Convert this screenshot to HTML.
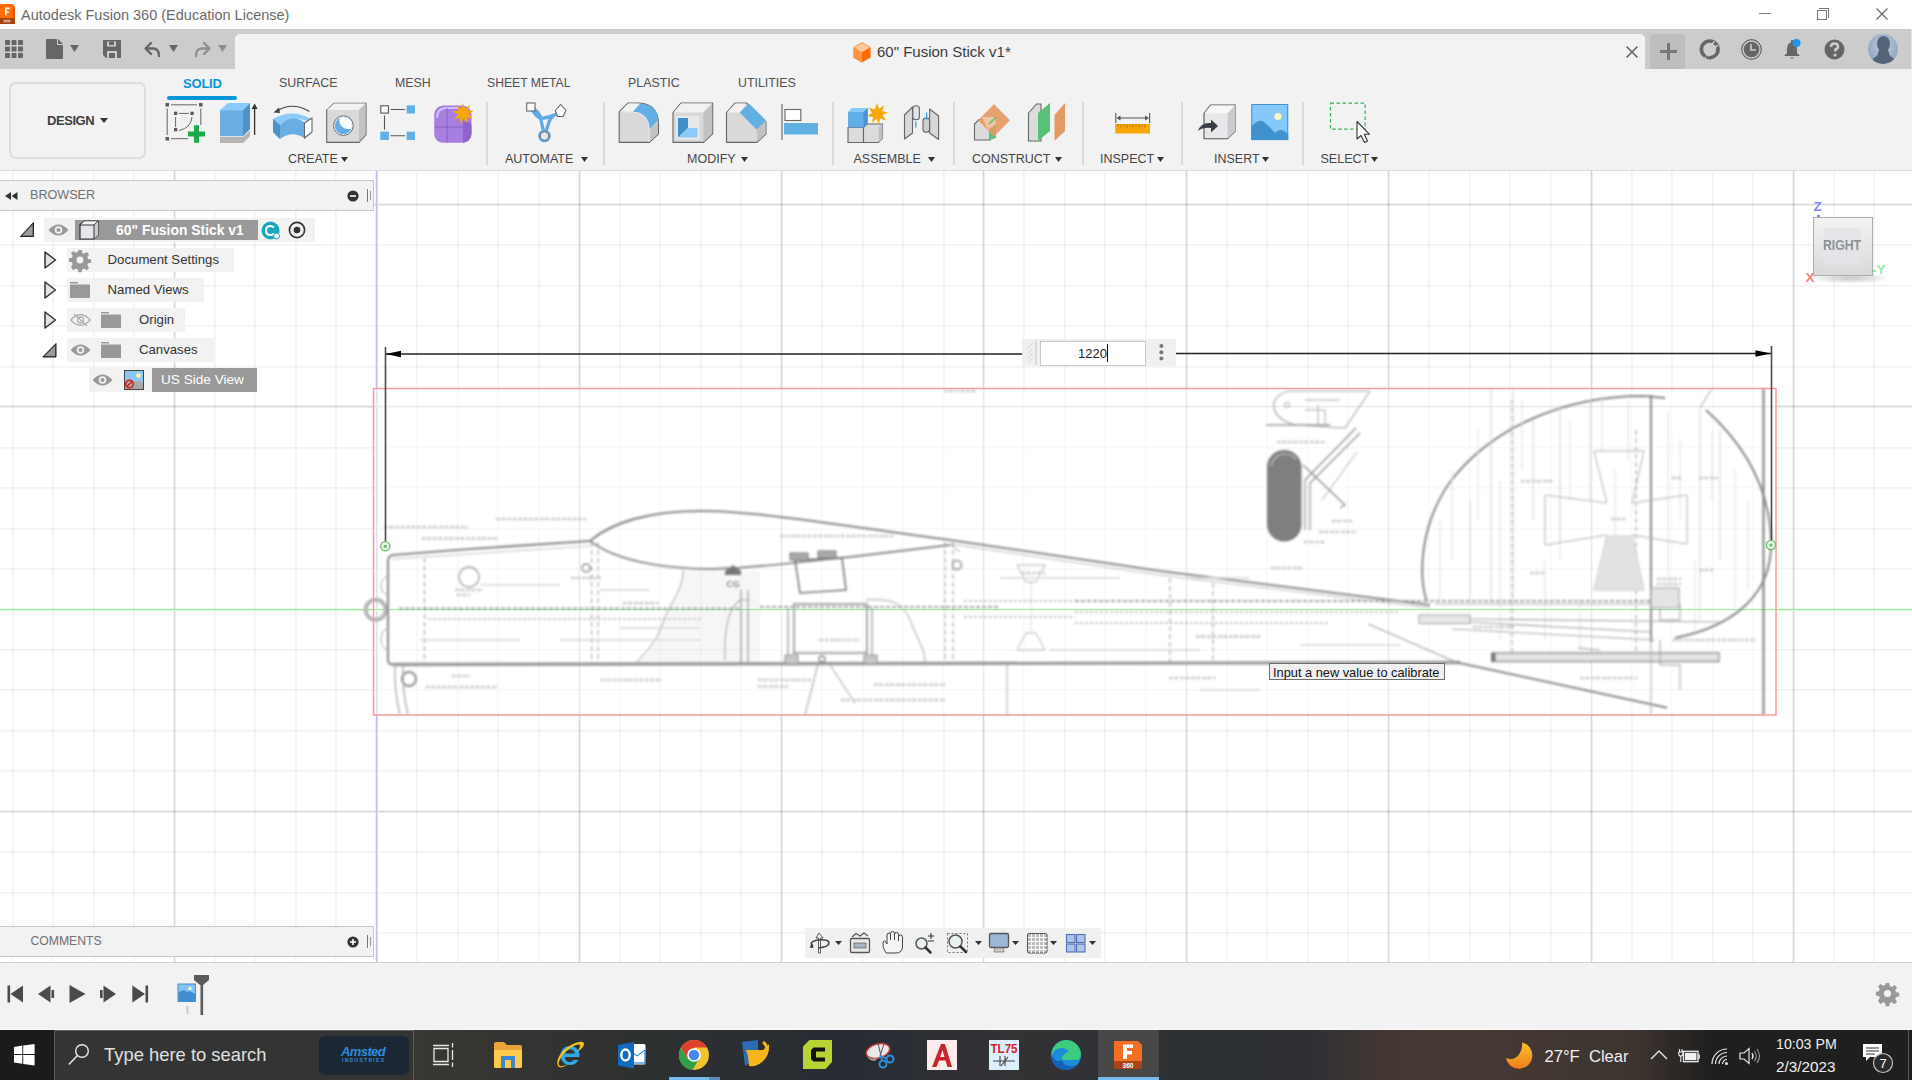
<!DOCTYPE html>
<html><head><meta charset="utf-8">
<style>
*{margin:0;padding:0;box-sizing:border-box}
html,body{width:1912px;height:1080px;overflow:hidden;background:#fff;font-family:"Liberation Sans",sans-serif}
.a{position:absolute}
.t{position:absolute;white-space:pre;line-height:1}
svg{position:absolute;overflow:visible}
</style></head><body>
<!-- TITLE BAR -->
<div class="a" style="left:0;top:0;width:1912px;height:29px;background:#fff"></div>
<svg style="left:0;top:4px" width="16" height="21" viewBox="0 0 16 21"><path d="M0 0H13L15 3V20H0Z" fill="#FF6D0A"/><path d="M13 3.5L15 4V20H13Z" fill="#D9560A"/><rect x="0" y="14" width="15" height="6" fill="#A8430F"/><path d="M5 3.6H9.6V5.2H6.6V7.4H9V8.8H6.6V11.2H5Z" fill="#fff"/><rect x="3.5" y="15.8" width="7" height="2.6" fill="#D8B8A8" opacity=".8"/></svg>
<div class="t" style="left:21px;top:8px;font-size:14.5px;color:#6b6b6b">Autodesk Fusion 360 (Education License)</div>
<div class="a" style="left:1759px;top:13px;width:12px;height:1px;background:#777"></div>
<div class="a" style="left:1817px;top:10px;width:10px;height:10px;border:1px solid #777;background:#fff"></div>
<div class="a" style="left:1819px;top:8px;width:10px;height:10px;border-top:1px solid #777;border-right:1px solid #777"></div>
<svg style="left:1876px;top:8px" width="12" height="12"><path d="M0.5 0.5L11.5 11.5M11.5 0.5L0.5 11.5" stroke="#666" stroke-width="1.1"/></svg>
<!-- TAB BAR -->
<div class="a" style="left:0;top:29px;width:1911px;height:40px;background:#CCCCCC"></div>
<div class="a" style="left:1911px;top:29px;width:1px;height:40px;background:#E4E4E4"></div>
<div class="a" style="left:235px;top:34px;width:1410px;height:35px;background:#F2F2F2;border-radius:5px 5px 0 0"></div>
<div class="a" style="left:1650px;top:34px;width:35px;height:35px;background:#BEBEBE;border-radius:4px 4px 0 0"></div>
<svg style="left:5px;top:40px" width="18" height="18" viewBox="0 0 18 18" fill="#666"><rect x="0" y="0" width="5" height="5" rx=".8"/><rect x="6.5" y="0" width="5" height="5" rx=".8"/><rect x="13" y="0" width="5" height="5" rx=".8"/><rect x="0" y="6.5" width="5" height="5" rx=".8"/><rect x="6.5" y="6.5" width="5" height="5" rx=".8"/><rect x="13" y="6.5" width="5" height="5" rx=".8"/><rect x="0" y="13" width="5" height="5" rx=".8"/><rect x="6.5" y="13" width="5" height="5" rx=".8"/><rect x="13" y="13" width="5" height="5" rx=".8"/></svg>
<svg style="left:46px;top:39px" width="17" height="20" viewBox="0 0 17 20"><path d="M1 0H11V6H17V19Q17 20 16 20H1Q0 20 0 19V1Q0 0 1 0Z" fill="#666"/><path d="M12 0L17 5H12Z" fill="#666"/></svg>
<svg style="left:70px;top:45px" width="9" height="7"><path d="M0 0H9L4.5 7Z" fill="#666"/></svg>
<svg style="left:103px;top:40px" width="18" height="18" viewBox="0 0 18 18"><path d="M1 0H17Q18 0 18 1V17Q18 18 17 18H3L0 15V1Q0 0 1 0Z" fill="#666"/><rect x="4" y="1.5" width="9" height="5" fill="#CCC"/><rect x="6" y="1.5" width="5" height="3.5" fill="#666"/><rect x="4" y="11" width="10" height="7" fill="#CCC"/><rect x="6" y="13" width="6" height="5" fill="#666"/></svg>
<svg style="left:144px;top:42px" width="17" height="15" viewBox="0 0 17 15"><path d="M7 1L1.5 6.5L7 12M2 6.5H9Q15 6.5 15 14" fill="none" stroke="#666" stroke-width="2.4" stroke-linecap="round" stroke-linejoin="round"/></svg>
<svg style="left:169px;top:45px" width="9" height="7"><path d="M0 0H9L4.5 7Z" fill="#666"/></svg>
<svg style="left:194px;top:42px" width="17" height="15" viewBox="0 0 17 15"><path d="M10 1L15.5 6.5L10 12M15 6.5H8Q2 6.5 2 14" fill="none" stroke="#8E8E8E" stroke-width="2.4" stroke-linecap="round" stroke-linejoin="round"/></svg>
<svg style="left:218px;top:45px" width="9" height="7"><path d="M0 0H9L4.5 7Z" fill="#8E8E8E"/></svg>
<!-- doc title -->
<svg style="left:852.5px;top:41.5px" width="18" height="21" viewBox="0 0 18 21"><path d="M9 0.5L17.3 5.2L9 10L0.7 5.2Z" fill="#FFC99C"/><path d="M0.7 5.2L9 10V20.3L0.7 15.5Z" fill="#FF9142"/><path d="M17.3 5.2L9 10V20.3L17.3 15.5Z" fill="#FF6B00"/><path d="M9 0.5L17.3 5.2V15.5L9 20.3L0.7 15.5V5.2Z" fill="none" stroke="#F08A48" stroke-width=".8"/></svg>
<div class="t" style="left:877px;top:44px;font-size:15px;color:#3c3c3c">60" Fusion Stick v1*</div>
<svg style="left:1626px;top:46px" width="12" height="12"><path d="M0.5 0.5L11.5 11.5M11.5 0.5L0.5 11.5" stroke="#666" stroke-width="1.6"/></svg>
<svg style="left:1660px;top:43px" width="17" height="17"><rect x="7" y="0" width="3" height="17" fill="#777"/><rect x="0" y="7" width="17" height="3" fill="#777"/></svg>
<svg style="left:1700px;top:38.5px" width="21" height="21" viewBox="0 0 21 21"><path d="M4.2 16.5A8.3 8.3 0 1 1 7.5 18.3" fill="none" stroke="#666" stroke-width="3.6" stroke-linecap="round"/><path d="M10.5 6.2L14.5 2.5M13.8 9.8L18 6" stroke="#CCC" stroke-width="1.5"/><path d="M5 11Q5 6.5 9 6.7L12 9.5L15.5 12.5Q15 16.5 10.5 16.2L8 18Z" fill="#CCC"/></svg>
<svg style="left:1741px;top:39px" width="21" height="21" viewBox="0 0 21 21"><circle cx="10.5" cy="10.5" r="9.8" fill="none" stroke="#666" stroke-width="1.2"/><circle cx="10.5" cy="10.5" r="7.8" fill="#666"/><path d="M10 5V11H15" fill="none" stroke="#CCC" stroke-width="1.6"/></svg>
<svg style="left:1782px;top:39px" width="22" height="21" viewBox="0 0 22 21"><path d="M10 3Q5 4 5 10V14L2 17H18L15 14V10Q15 4 10 3Z" fill="#666"/><path d="M8 18.5Q10 21 12 18.5Z" fill="#666"/><rect x="9" y="1" width="2" height="3" fill="#666"/><circle cx="14.5" cy="4" r="4" fill="#1B96E8"/></svg>
<svg style="left:1824px;top:39px" width="21" height="21" viewBox="0 0 21 21"><circle cx="10.5" cy="10.5" r="10" fill="#666"/><path d="M7 8Q7 4.5 10.5 4.5Q14 4.5 14 7.5Q14 9.5 11.5 10.5V12.5" fill="none" stroke="#CCC" stroke-width="2.6"/><circle cx="11" cy="16" r="1.6" fill="#CCC"/></svg>
<svg style="left:1868px;top:34px" width="30" height="30" viewBox="0 0 30 30"><defs><radialGradient id="av" cx=".5" cy=".4" r=".6"><stop offset="0" stop-color="#BFCDE0"/><stop offset="1" stop-color="#8FA3BE"/></radialGradient><clipPath id="avc"><circle cx="15" cy="15" r="15"/></clipPath></defs><circle cx="15" cy="15" r="15" fill="url(#av)"/><g clip-path="url(#avc)" fill="#556477"><ellipse cx="15.5" cy="10" rx="6.5" ry="8"/><path d="M11 16H20L22 22Q27 24 28 30H3Q4 24 9 22Z"/></g></svg>
<!-- TOOLBAR -->
<div class="a" style="left:0;top:69px;width:1912px;height:101px;background:#F2F2F2"></div>
<div class="a" style="left:0;top:170px;width:1912px;height:1px;background:#DCDCDC"></div>
<div class="a" style="left:9px;top:82px;width:137px;height:77px;border:2px solid #DDDDDD;border-radius:7px"></div>
<div class="t" style="left:47px;top:113.5px;font-size:13px;font-weight:bold;color:#3E3E3E;letter-spacing:-0.45px">DESIGN</div>
<svg style="left:100px;top:118px" width="8" height="5"><path d="M0 0H8L4 5Z" fill="#333"/></svg>
<div class="t" style="left:183px;top:77px;font-size:13px;color:#0696D7;font-weight:bold;letter-spacing:-0.2px">SOLID</div>
<div class="a" style="left:167px;top:96px;width:70px;height:4px;background:#0696D7;border-radius:2px"></div>
<div class="t" style="left:279px;top:77px;font-size:12.4px;color:#505050">SURFACE</div>
<div class="t" style="left:395px;top:77px;font-size:12.4px;color:#505050">MESH</div>
<div class="t" style="left:487px;top:77px;font-size:12.2px;color:#505050">SHEET METAL</div>
<div class="t" style="left:628px;top:77px;font-size:12.4px;color:#505050">PLASTIC</div>
<div class="t" style="left:738px;top:77px;font-size:12.4px;color:#505050">UTILITIES</div>
<!-- group labels -->
<div class="t" style="left:288px;top:152.5px;font-size:12.5px;color:#454545">CREATE</div>
<svg style="left:341px;top:157px" width="7" height="5"><path d="M0 0H7L3.5 5Z" fill="#333"/></svg>
<div class="t" style="left:505px;top:152.5px;font-size:12.5px;color:#454545">AUTOMATE</div>
<svg style="left:581px;top:157px" width="7" height="5"><path d="M0 0H7L3.5 5Z" fill="#333"/></svg>
<div class="t" style="left:687px;top:152.5px;font-size:12.5px;color:#454545">MODIFY</div>
<svg style="left:741px;top:157px" width="7" height="5"><path d="M0 0H7L3.5 5Z" fill="#333"/></svg>
<div class="t" style="left:853.5px;top:152.5px;font-size:12.5px;color:#454545">ASSEMBLE</div>
<svg style="left:928px;top:157px" width="7" height="5"><path d="M0 0H7L3.5 5Z" fill="#333"/></svg>
<div class="t" style="left:972px;top:152.5px;font-size:12.5px;color:#454545">CONSTRUCT</div>
<svg style="left:1055px;top:157px" width="7" height="5"><path d="M0 0H7L3.5 5Z" fill="#333"/></svg>
<div class="t" style="left:1100px;top:152.5px;font-size:12.5px;color:#454545">INSPECT</div>
<svg style="left:1157px;top:157px" width="7" height="5"><path d="M0 0H7L3.5 5Z" fill="#333"/></svg>
<div class="t" style="left:1214px;top:152.5px;font-size:12.5px;color:#454545">INSERT</div>
<svg style="left:1262px;top:157px" width="7" height="5"><path d="M0 0H7L3.5 5Z" fill="#333"/></svg>
<div class="t" style="left:1320.5px;top:152.5px;font-size:12.5px;color:#454545">SELECT</div>
<svg style="left:1371px;top:157px" width="7" height="5"><path d="M0 0H7L3.5 5Z" fill="#333"/></svg>
<!-- separators -->
<div class="a" style="left:486px;top:102px;width:2px;height:63px;background:#DADADA"></div>
<div class="a" style="left:603px;top:102px;width:2px;height:63px;background:#DADADA"></div>
<div class="a" style="left:832px;top:102px;width:2px;height:63px;background:#DADADA"></div>
<div class="a" style="left:953px;top:102px;width:2px;height:63px;background:#DADADA"></div>
<div class="a" style="left:1082px;top:102px;width:2px;height:63px;background:#DADADA"></div>
<div class="a" style="left:1181px;top:102px;width:2px;height:63px;background:#DADADA"></div>
<div class="a" style="left:1302px;top:102px;width:2px;height:63px;background:#DADADA"></div>
<!-- VIEWPORT -->
<div class="a" style="left:0;top:171px;width:1912px;height:792px;background:#fff;overflow:hidden">
<svg style="left:0;top:0" width="1912" height="792" shape-rendering="crispEdges" fill="#000">
<rect x="0" y="32" width="1912" height="1" fill-opacity="0.051"/><rect x="0" y="33" width="1912" height="1" fill-opacity="0.137"/><rect x="0" y="34" width="1912" height="1" fill-opacity="0.063"/>
<rect x="0" y="73" width="1912" height="1" fill-opacity="0.047"/><rect x="0" y="74" width="1912" height="1" fill-opacity="0.031"/>
<rect x="0" y="114" width="1912" height="1" fill-opacity="0.047"/><rect x="0" y="115" width="1912" height="1" fill-opacity="0.031"/>
<rect x="0" y="154" width="1912" height="1" fill-opacity="0.047"/><rect x="0" y="155" width="1912" height="1" fill-opacity="0.031"/>
<rect x="0" y="195" width="1912" height="1" fill-opacity="0.047"/><rect x="0" y="196" width="1912" height="1" fill-opacity="0.031"/>
<rect x="0" y="234" width="1912" height="1" fill-opacity="0.051"/><rect x="0" y="235" width="1912" height="1" fill-opacity="0.137"/><rect x="0" y="236" width="1912" height="1" fill-opacity="0.063"/>
<rect x="0" y="276" width="1912" height="1" fill-opacity="0.047"/><rect x="0" y="277" width="1912" height="1" fill-opacity="0.031"/>
<rect x="0" y="316" width="1912" height="1" fill-opacity="0.047"/><rect x="0" y="317" width="1912" height="1" fill-opacity="0.031"/>
<rect x="0" y="357" width="1912" height="1" fill-opacity="0.047"/><rect x="0" y="358" width="1912" height="1" fill-opacity="0.031"/>
<rect x="0" y="397" width="1912" height="1" fill-opacity="0.047"/><rect x="0" y="398" width="1912" height="1" fill-opacity="0.031"/>
<rect x="0" y="437" width="1912" height="1" fill-opacity="0.051"/><rect x="0" y="438" width="1912" height="1" fill-opacity="0.137"/><rect x="0" y="439" width="1912" height="1" fill-opacity="0.063"/>
<rect x="0" y="478" width="1912" height="1" fill-opacity="0.047"/><rect x="0" y="479" width="1912" height="1" fill-opacity="0.031"/>
<rect x="0" y="518" width="1912" height="1" fill-opacity="0.047"/><rect x="0" y="519" width="1912" height="1" fill-opacity="0.031"/>
<rect x="0" y="559" width="1912" height="1" fill-opacity="0.047"/><rect x="0" y="560" width="1912" height="1" fill-opacity="0.031"/>
<rect x="0" y="599" width="1912" height="1" fill-opacity="0.047"/><rect x="0" y="600" width="1912" height="1" fill-opacity="0.031"/>
<rect x="0" y="639" width="1912" height="1" fill-opacity="0.051"/><rect x="0" y="640" width="1912" height="1" fill-opacity="0.137"/><rect x="0" y="641" width="1912" height="1" fill-opacity="0.063"/>
<rect x="0" y="680" width="1912" height="1" fill-opacity="0.047"/><rect x="0" y="681" width="1912" height="1" fill-opacity="0.031"/>
<rect x="0" y="721" width="1912" height="1" fill-opacity="0.047"/><rect x="0" y="722" width="1912" height="1" fill-opacity="0.031"/>
<rect x="0" y="761" width="1912" height="1" fill-opacity="0.047"/><rect x="0" y="762" width="1912" height="1" fill-opacity="0.031"/>
<rect x="12" y="0" width="1" height="792" fill-opacity="0.047"/><rect x="13" y="0" width="1" height="792" fill-opacity="0.031"/>
<rect x="52" y="0" width="1" height="792" fill-opacity="0.047"/><rect x="53" y="0" width="1" height="792" fill-opacity="0.031"/>
<rect x="93" y="0" width="1" height="792" fill-opacity="0.047"/><rect x="94" y="0" width="1" height="792" fill-opacity="0.031"/>
<rect x="133" y="0" width="1" height="792" fill-opacity="0.047"/><rect x="134" y="0" width="1" height="792" fill-opacity="0.031"/>
<rect x="173" y="0" width="1" height="792" fill-opacity="0.051"/><rect x="174" y="0" width="1" height="792" fill-opacity="0.149"/><rect x="175" y="0" width="1" height="792" fill-opacity="0.063"/>
<rect x="214" y="0" width="1" height="792" fill-opacity="0.047"/><rect x="215" y="0" width="1" height="792" fill-opacity="0.031"/>
<rect x="254" y="0" width="1" height="792" fill-opacity="0.047"/><rect x="255" y="0" width="1" height="792" fill-opacity="0.031"/>
<rect x="295" y="0" width="1" height="792" fill-opacity="0.047"/><rect x="296" y="0" width="1" height="792" fill-opacity="0.031"/>
<rect x="335" y="0" width="1" height="792" fill-opacity="0.047"/><rect x="336" y="0" width="1" height="792" fill-opacity="0.031"/>
<rect x="375" y="0" width="1" height="792" fill-opacity="0.051"/><rect x="376" y="0" width="1" height="792" fill-opacity="0.149"/><rect x="377" y="0" width="1" height="792" fill-opacity="0.063"/>
<rect x="416" y="0" width="1" height="792" fill-opacity="0.047"/><rect x="417" y="0" width="1" height="792" fill-opacity="0.031"/>
<rect x="457" y="0" width="1" height="792" fill-opacity="0.047"/><rect x="458" y="0" width="1" height="792" fill-opacity="0.031"/>
<rect x="497" y="0" width="1" height="792" fill-opacity="0.047"/><rect x="498" y="0" width="1" height="792" fill-opacity="0.031"/>
<rect x="538" y="0" width="1" height="792" fill-opacity="0.047"/><rect x="539" y="0" width="1" height="792" fill-opacity="0.031"/>
<rect x="578" y="0" width="1" height="792" fill-opacity="0.051"/><rect x="579" y="0" width="1" height="792" fill-opacity="0.149"/><rect x="580" y="0" width="1" height="792" fill-opacity="0.063"/>
<rect x="619" y="0" width="1" height="792" fill-opacity="0.047"/><rect x="620" y="0" width="1" height="792" fill-opacity="0.031"/>
<rect x="659" y="0" width="1" height="792" fill-opacity="0.047"/><rect x="660" y="0" width="1" height="792" fill-opacity="0.031"/>
<rect x="700" y="0" width="1" height="792" fill-opacity="0.047"/><rect x="701" y="0" width="1" height="792" fill-opacity="0.031"/>
<rect x="740" y="0" width="1" height="792" fill-opacity="0.047"/><rect x="741" y="0" width="1" height="792" fill-opacity="0.031"/>
<rect x="780" y="0" width="1" height="792" fill-opacity="0.051"/><rect x="781" y="0" width="1" height="792" fill-opacity="0.149"/><rect x="782" y="0" width="1" height="792" fill-opacity="0.063"/>
<rect x="821" y="0" width="1" height="792" fill-opacity="0.047"/><rect x="822" y="0" width="1" height="792" fill-opacity="0.031"/>
<rect x="862" y="0" width="1" height="792" fill-opacity="0.047"/><rect x="863" y="0" width="1" height="792" fill-opacity="0.031"/>
<rect x="902" y="0" width="1" height="792" fill-opacity="0.047"/><rect x="903" y="0" width="1" height="792" fill-opacity="0.031"/>
<rect x="943" y="0" width="1" height="792" fill-opacity="0.047"/><rect x="944" y="0" width="1" height="792" fill-opacity="0.031"/>
<rect x="982" y="0" width="1" height="792" fill-opacity="0.051"/><rect x="983" y="0" width="1" height="792" fill-opacity="0.149"/><rect x="984" y="0" width="1" height="792" fill-opacity="0.063"/>
<rect x="1023" y="0" width="1" height="792" fill-opacity="0.047"/><rect x="1024" y="0" width="1" height="792" fill-opacity="0.031"/>
<rect x="1064" y="0" width="1" height="792" fill-opacity="0.047"/><rect x="1065" y="0" width="1" height="792" fill-opacity="0.031"/>
<rect x="1104" y="0" width="1" height="792" fill-opacity="0.047"/><rect x="1105" y="0" width="1" height="792" fill-opacity="0.031"/>
<rect x="1145" y="0" width="1" height="792" fill-opacity="0.047"/><rect x="1146" y="0" width="1" height="792" fill-opacity="0.031"/>
<rect x="1185" y="0" width="1" height="792" fill-opacity="0.051"/><rect x="1186" y="0" width="1" height="792" fill-opacity="0.149"/><rect x="1187" y="0" width="1" height="792" fill-opacity="0.063"/>
<rect x="1226" y="0" width="1" height="792" fill-opacity="0.047"/><rect x="1227" y="0" width="1" height="792" fill-opacity="0.031"/>
<rect x="1266" y="0" width="1" height="792" fill-opacity="0.047"/><rect x="1267" y="0" width="1" height="792" fill-opacity="0.031"/>
<rect x="1307" y="0" width="1" height="792" fill-opacity="0.047"/><rect x="1308" y="0" width="1" height="792" fill-opacity="0.031"/>
<rect x="1347" y="0" width="1" height="792" fill-opacity="0.047"/><rect x="1348" y="0" width="1" height="792" fill-opacity="0.031"/>
<rect x="1387" y="0" width="1" height="792" fill-opacity="0.051"/><rect x="1388" y="0" width="1" height="792" fill-opacity="0.149"/><rect x="1389" y="0" width="1" height="792" fill-opacity="0.063"/>
<rect x="1428" y="0" width="1" height="792" fill-opacity="0.047"/><rect x="1429" y="0" width="1" height="792" fill-opacity="0.031"/>
<rect x="1469" y="0" width="1" height="792" fill-opacity="0.047"/><rect x="1470" y="0" width="1" height="792" fill-opacity="0.031"/>
<rect x="1509" y="0" width="1" height="792" fill-opacity="0.047"/><rect x="1510" y="0" width="1" height="792" fill-opacity="0.031"/>
<rect x="1550" y="0" width="1" height="792" fill-opacity="0.047"/><rect x="1551" y="0" width="1" height="792" fill-opacity="0.031"/>
<rect x="1590" y="0" width="1" height="792" fill-opacity="0.051"/><rect x="1591" y="0" width="1" height="792" fill-opacity="0.149"/><rect x="1592" y="0" width="1" height="792" fill-opacity="0.063"/>
<rect x="1631" y="0" width="1" height="792" fill-opacity="0.047"/><rect x="1632" y="0" width="1" height="792" fill-opacity="0.031"/>
<rect x="1671" y="0" width="1" height="792" fill-opacity="0.047"/><rect x="1672" y="0" width="1" height="792" fill-opacity="0.031"/>
<rect x="1712" y="0" width="1" height="792" fill-opacity="0.047"/><rect x="1713" y="0" width="1" height="792" fill-opacity="0.031"/>
<rect x="1752" y="0" width="1" height="792" fill-opacity="0.047"/><rect x="1753" y="0" width="1" height="792" fill-opacity="0.031"/>
<rect x="1792" y="0" width="1" height="792" fill-opacity="0.051"/><rect x="1793" y="0" width="1" height="792" fill-opacity="0.149"/><rect x="1794" y="0" width="1" height="792" fill-opacity="0.063"/>
<rect x="1833" y="0" width="1" height="792" fill-opacity="0.047"/><rect x="1834" y="0" width="1" height="792" fill-opacity="0.031"/>
<rect x="1873" y="0" width="1" height="792" fill-opacity="0.047"/><rect x="1874" y="0" width="1" height="792" fill-opacity="0.031"/>
</svg>
</div>
<div class="a" style="left:376px;top:171px;width:1px;height:792px;background:#C0C0F8"></div>
<div class="a" style="left:377px;top:171px;width:1px;height:792px;background:#DADAFB"></div>
<div class="a" style="left:0;top:609px;width:1912px;height:1px;background:#98F098"></div>
<div class="a" style="left:0;top:610px;width:1912px;height:1px;background:#DDF9DD"></div>
<svg style="left:0;top:0" width="1912" height="180" viewBox="0 0 1912 180">
<defs>
<linearGradient id="gface" x1="0" y1="0" x2="0" y2="1"><stop offset="0" stop-color="#E2E2E2"/><stop offset="1" stop-color="#D2D2D2"/></linearGradient>
</defs>
<!-- sketch -->
<g fill="#5A5A5A">
<rect x="165.5" y="103" width="3.5" height="3.5"/><rect x="199" y="103" width="3.5" height="3.5"/><rect x="165.5" y="137" width="3.5" height="3.5"/>
<rect x="174" y="111.7" width="3.3" height="3.3"/><rect x="190.4" y="111.7" width="3.3" height="3.3"/><rect x="174" y="128" width="3.3" height="3.3"/>
</g>
<g stroke="#666" stroke-width="1" fill="none">
<path d="M171 104.8H197M167.2 108.5V135M200.8 108.5V125M171 138.7H188"/>
<path d="M179 113.4H189M175.6 117V127M192 117Q191 128 179 130.5"/>
</g>
<path d="M194 125.2H199V131.5H205V136.5H199V142.8H194V136.5H188V131.5H194Z" fill="#1EAA4B"/>
<!-- extrude -->
<path d="M220 137H243L250 130.5V136L243 143H220Z" fill="#B5B5B5"/>
<path d="M220 110.2L228 103H250L243 110.2Z" fill="#8BCBFA"/>
<path d="M220 110.2H243V136.2H220Z" fill="#69AEE3"/>
<path d="M243 110.2L250 103V129L243 136.2Z" fill="#4A94CE"/>
<path d="M254.6 107V135" stroke="#333" stroke-width="1.3"/><path d="M251.6 109L254.6 103.5L257.6 109Z" fill="#333"/>
<!-- revolve -->
<path d="M276 111.5Q292 101 309.5 111.5" fill="none" stroke="#444" stroke-width="1.2"/><path d="M273.5 112.5L279 107.5L280 113Z" fill="#444"/>
<path d="M273 119Q292 108 311 119V123Q292 113 280 125V139L273 132Z" fill="#8BCBFA"/>
<path d="M280 125Q292 113 304 122V138Q292 130 280 139Z" fill="#69AEE3"/>
<path d="M273 119L280 125V139L273 132Z" fill="#4A94CE"/>
<path d="M304.5 123L312 118V132L304.5 138Z" fill="#fff" stroke="#666" stroke-width="1.1"/>
<!-- hole -->
<path d="M326.7 110.1L334 103.2H366V134.8L359 142.4H326.7Z" fill="#D9D9D9" stroke="#666" stroke-width="1.1"/>
<path d="M327 110L334 103.6H365.5L359 110Z" fill="#F2F2F2"/>
<path d="M359 110L365.5 103.6V134.6L359 142Z" fill="#C2C2C2"/>
<circle cx="343.4" cy="125.6" r="9.8" fill="#fff" stroke="#666" stroke-width="1"/>
<clipPath id="hc"><circle cx="343.4" cy="125.6" r="8.6"/></clipPath><g clip-path="url(#hc)"><circle cx="343.4" cy="125.6" r="9" fill="#61AFE6"/><circle cx="348" cy="120.5" r="8.6" fill="#fff"/></g>
<!-- pattern -->
<rect x="380.8" y="105.8" width="7.6" height="7.3" fill="#fff" stroke="#555" stroke-width="1.1"/>
<g fill="#62AFE6"><rect x="406.6" y="105.4" width="8.4" height="8.1"/><rect x="380.3" y="131.7" width="8.6" height="8.3"/><rect x="406.6" y="131.7" width="8.4" height="8.3"/></g>
<path d="M390.5 109.5H405M384.5 115.5V129.5M390.5 135.8H405" stroke="#555" stroke-width="1.1"/>
<!-- form -->
<rect x="434.2" y="105.5" width="37.3" height="37.3" rx="9" fill="#A77FE2"/>
<path d="M437 118Q437 108 447 108H458" stroke="#D7BFFA" stroke-width="2" fill="none"/>
<path d="M447 108V142.5M434.5 127H471" stroke="#8A60C8" stroke-width="1"/><path d="M463 122Q471 120 471.5 126V134Q471 141 463 142.8Z" fill="#8F62D0"/>
<path d="M463.3 103L465 109L470 104.5L467.8 110.5L474 110.8L468.5 114L473 118.8L467 117.2L467.5 123.5L463.5 118.5L460.5 124L460 117.7L454 119.5L458 114.5L452.5 111.5L458.8 110.5L456 104.8L461.5 109Z" fill="#F6A800"/>
<!-- automate -->
<path d="M531 107Q537 120 544 118Q552 117 560 112M531 107Q540 112 541 120L544.5 136M560 112Q552 115 549 122L544.5 136" fill="none" stroke="#5FAAE0" stroke-width="3.3"/>
<rect x="526.7" y="103" width="8.3" height="8" fill="#fff" stroke="#666" stroke-width="1.1"/>
<path d="M555.3 110.5L560.7 104.5L566 110.5L563 116.5H557.5Z" fill="#fff" stroke="#666" stroke-width="1.1"/>
<circle cx="544.5" cy="136" r="6.3" fill="#5FAAE0"/><circle cx="544.5" cy="136" r="4.3" fill="#E6E6E6" stroke="#666" stroke-width="1"/>
<!-- fillet -->
<path d="M619.2 112L628 103H639Q658.5 104 658.5 124V134L649.3 142.4H619.2Z" fill="#D9D9D9" stroke="#666" stroke-width="1.1"/>
<path d="M620 111.8L628.3 103.6H639.5L633 111.8Z" fill="#F2F2F2"/>
<path d="M649.3 130L658 121V134L649.3 142Z" fill="#C4C4C4"/>
<path d="M633 111.8L640.5 103.6Q657.5 105 658.2 120L649.3 129.5Q648.5 113 633 111.8Z" fill="#62AFE6"/>
<path d="M620 112H633Q649 113 649.3 129.5V142" fill="none" stroke="#E8E8E8" stroke-width="1"/>
<!-- shell -->
<path d="M673 112.7L681 103H712.7V133.8L703.5 142.4H673Z" fill="#D9D9D9" stroke="#666" stroke-width="1.1"/>
<path d="M673.5 112.5L681.3 103.6H712L703.5 112.5Z" fill="#F2F2F2"/>
<path d="M703.5 112.5L712.2 103.6V133.6L703.5 142Z" fill="#C2C2C2"/>
<rect x="676" y="116" width="23.5" height="23.5" fill="#E8E8E8"/>
<path d="M678 118H688V128L678 137.5Z" fill="#3E8FCC"/><path d="M688 128H697.5V137.5H678Z" fill="#8BCBFA"/>
<!-- chamfer -->
<path d="M726.5 112.7L735 103H746.5L766 122V134L757 142.4H726.5Z" fill="#D9D9D9" stroke="#666" stroke-width="1.1"/>
<path d="M727 112.5L735.3 103.6H746L739.7 112.5Z" fill="#F2F2F2"/>
<path d="M757 128L765.6 121V134L757 142Z" fill="#C2C2C2"/>
<path d="M739.7 112.5L749 103.5L766 120.5L756.5 129.5Z" fill="#62AFE6"/>
<!-- align -->
<path d="M782 104V140" stroke="#777" stroke-width="1.3"/>
<rect x="785" y="109.5" width="15.8" height="11" fill="#fff" stroke="#666" stroke-width="1.1"/>
<rect x="784" y="123" width="34" height="11.5" fill="#62AFE6"/>
<!-- new component -->
<path d="M848 127.5H863.5V142.5H848Z" fill="#DCDCDC" stroke="#666" stroke-width="1.1"/>
<path d="M863.5 127.5L867 124H882.5V138L878.5 142.5H863.5Z" fill="#DCDCDC" stroke="#666" stroke-width="1.1"/>
<path d="M878.5 127.5L882.5 124V138L878.5 142.5Z" fill="#C2C2C2"/>
<path d="M848 112L852 108.2H867.7V123.5L863.5 127.5H848Z" fill="#62AFE6"/>
<path d="M848 112L852 108.2H867.7L863.5 112Z" fill="#8BCBFA"/><path d="M863.5 112L867.7 108.2V123.5L863.5 127.5Z" fill="#4A94CE"/>
<path d="M877.3 103L879 109L884.5 105L882 111L888 112.5L882.5 115L886 120.5L880 118.5L879 124.5L876.5 118.8L872 123L873 117L867 116L872 113L868.5 107.5L874.5 109.5Z" fill="#F6A800"/>
<!-- joint -->
<path d="M904.5 115L912.5 107V133L904.5 139Z" fill="#D8D8D8" stroke="#666" stroke-width="1.1" stroke-linejoin="round"/>
<rect x="912.8" y="105.8" width="6.6" height="13.9" rx="3" fill="#E4E4E4" stroke="#666" stroke-width="1.1"/>
<path d="M929.6 109L938.6 116V139.5L929.6 133Z" fill="#D8D8D8" stroke="#666" stroke-width="1.1" stroke-linejoin="round"/>
<rect x="923" y="118" width="6.6" height="14.3" rx="3" fill="#CFCFCF" stroke="#666" stroke-width="1.1"/>
<path d="M915.8 121.5V127.5M926.6 112.4V119.7" stroke="#3A9BE0" stroke-width="1.3"/>
<!-- construct plane -->
<path d="M974.5 124L979 119.5H990V140H974.5Z" fill="#DCDCDC" stroke="#666" stroke-width="1.1"/>
<path d="M990 125L996 120V138L990 140Z" fill="#5AC27A"/>
<path d="M994 104.2L1010 120.3L994 136.5L978 120.3Z" fill="#E59A64" opacity=".92"/>
<path d="M982 117H995L996 124L988 130Z" fill="#F3D0B4" opacity=".8"/>
<path d="M989 124L996 117" stroke="#4CC46E" stroke-width="1.4"/>
<!-- midplane -->
<path d="M1028.5 113L1036.5 104H1041V141H1028.5Z" fill="#DCDCDC" stroke="#666" stroke-width="1.1"/>
<path d="M1038 113L1050 103V131L1038 141Z" fill="#56C177"/>
<path d="M1054.5 115L1065 103V131L1054.5 141Z" fill="#E59A64"/>
<!-- measure -->
<path d="M1115.8 113V123M1149.6 113V123M1118 118H1147.5" stroke="#555" stroke-width="1.1"/>
<path d="M1116.5 118L1120.5 115.5V120.5Z M1149 118L1145 115.5V120.5Z" fill="#555"/>
<rect x="1115.3" y="124" width="34.7" height="9.5" fill="#F7A700"/>
<path d="M1118 124V127M1121 124V128M1124 124V127M1127 124V128M1130 124V127M1133 124V128M1136 124V127M1139 124V128M1142 124V127M1145 124V128" stroke="#A97200" stroke-width=".7"/>
<!-- insert derive -->
<path d="M1204 113.5L1210.5 105H1235V131.5L1227.5 138.7H1204Z" fill="#E8E8EA" stroke="#555" stroke-width="1.1"/>
<path d="M1227.5 113.5L1235 105V131.5L1227.5 138.7Z" fill="#CACBCF"/>
<path d="M1204.5 113.3L1210.8 105.5H1234.5L1227.5 113.3Z" fill="#F8F8F8"/>
<path d="M1198 131Q1201 122 1211 123V119.5L1218 126L1211 132.5V128Q1203 127 1198 131Z" fill="#3A3F45"/>
<!-- canvas -->
<rect x="1251.3" y="104" width="36.9" height="36.1" fill="#85C8FA"/>
<path d="M1251.3 140.1V127Q1258 118 1264 122Q1270 127 1275 133Q1279 128 1284 131L1288.2 134V140.1Z" fill="#3F92CD"/>
<circle cx="1278" cy="116.5" r="3.6" fill="#FBF6C2"/>
<path d="M1251.8 104.5H1287.7V139.6H1251.8Z" fill="none" stroke="#3F92CD" stroke-width="1"/>
<!-- select -->
<rect x="1330.5" y="103.2" width="34.6" height="26" fill="none" stroke="#2FB24F" stroke-width="1.2" stroke-dasharray="3.5 2.5"/>
<path d="M1357 121.5V139L1361 135.5L1364.5 142.5L1367.5 141L1364.3 134.3H1369.5Z" fill="#fff" stroke="#333" stroke-width="1.1" stroke-linejoin="round"/>
</svg>
<!-- BROWSER -->
<div class="a" style="left:0;top:180px;width:374px;height:31px;background:#F2F2F2;border:1px solid #C8C8C8;border-left:none"></div>
<svg style="left:5px;top:192px" width="14" height="8"><path d="M0 4L6 0V8Z M6.5 4L12.5 0V8Z" fill="#333"/></svg>
<div class="t" style="left:30px;top:189px;font-size:12.6px;color:#707070">BROWSER</div>
<svg style="left:347px;top:190px" width="12" height="12"><circle cx="6" cy="6" r="5.6" fill="#333"/><rect x="3" y="5.2" width="6" height="1.6" fill="#fff"/></svg>
<div class="a" style="left:367px;top:189px;width:1px;height:13px;background:#777"></div>
<div class="a" style="left:369.5px;top:191px;width:1px;height:9px;background:#999"></div>
<!-- tree rows -->
<div class="a" style="left:44px;top:218px;width:271px;height:24px;background:#F2F2F2"></div>
<div class="a" style="left:75px;top:220px;width:183px;height:20px;background:#999999"></div>
<svg style="left:20px;top:222px" width="14" height="15"><path d="M13.5 0.5V14.5H0.5Z" fill="#555" stroke="#222" stroke-width="1"/><path d="M12.5 3V13.5H2.5Z" fill="#9A9A9A"/></svg>
<svg style="left:48px;top:223px" width="21" height="14" viewBox="0 0 21 14"><path d="M0.5 7Q10.5 -4 20.5 7Q10.5 18 0.5 7Z" fill="#999"/><circle cx="10.5" cy="7" r="3.8" fill="#F2F2F2"/><circle cx="10.5" cy="7" r="2" fill="#999"/></svg>
<svg style="left:79px;top:220px" width="20" height="20" viewBox="0 0 20 20"><path d="M1 5L5 1H19V15L15 19H1Z" fill="#E4E6EA" stroke="#333" stroke-width="1.2"/><path d="M15 5L19 1V15L15 19Z" fill="#C9CCD2"/><path d="M1.5 5L5 1.5H18.5L15 5Z" fill="#F8F8F8"/><path d="M1 5H15V19M15 5L19 1" fill="none" stroke="#333" stroke-width="1"/></svg>
<div class="t" style="left:116px;top:223.5px;font-size:13.9px;font-weight:bold;color:#fff">60" Fusion Stick v1</div>
<svg style="left:261px;top:221px" width="20" height="20"><circle cx="9.5" cy="9.5" r="9" fill="#1AA7BD"/><path d="M13 6.5Q11.5 5 9.5 5Q5 5 5 9.5Q5 14 9.5 14Q11.5 14 13 12.5" fill="none" stroke="#fff" stroke-width="2"/><circle cx="15.5" cy="15" r="3" fill="#fff" stroke="#1AA7BD" stroke-width="1"/></svg>
<svg style="left:288px;top:221px" width="18" height="18"><circle cx="9" cy="9" r="7.6" fill="none" stroke="#333" stroke-width="1.6"/><circle cx="9" cy="9" r="3.3" fill="#333"/></svg>

<div class="a" style="left:67px;top:248px;width:167px;height:24px;background:#F2F2F2"></div>
<svg style="left:44px;top:251px" width="13" height="18"><path d="M1 1L11.5 9L1 17Z" fill="#E0E2E6" stroke="#333" stroke-width="1.5" stroke-linejoin="round"/></svg>
<svg style="left:70px;top:250px" width="20" height="20" viewBox="0 0 20 20"><path fill="#999" d="M8.3 0h3.4l.5 3a7 7 0 0 1 2 .8l2.5-1.8 2.4 2.4-1.8 2.5a7 7 0 0 1 .8 2l3 .5v3.4l-3 .5a7 7 0 0 1-.8 2l1.8 2.5-2.4 2.4-2.5-1.8a7 7 0 0 1-2 .8l-.5 3H8.3l-.5-3a7 7 0 0 1-2-.8l-2.5 1.8L.9 16.8l1.8-2.5a7 7 0 0 1-.8-2l-3-.5V8.3l3-.5a7 7 0 0 1 .8-2L.9 3.3 3.3.9l2.5 1.8a7 7 0 0 1 2-.8Z"/><circle cx="10" cy="10" r="3.4" fill="#F2F2F2"/></svg>
<div class="t" style="left:107.6px;top:253.3px;font-size:13.2px;color:#333">Document Settings</div>

<div class="a" style="left:67px;top:278px;width:137px;height:24px;background:#F2F2F2"></div>
<svg style="left:44px;top:281px" width="13" height="18"><path d="M1 1L11.5 9L1 17Z" fill="#E0E2E6" stroke="#333" stroke-width="1.5" stroke-linejoin="round"/></svg>
<svg style="left:70px;top:282px" width="20" height="16"><path d="M0 0H8V1.5H0Z M0 2.5H20V16H0Z" fill="#999"/></svg>
<div class="t" style="left:107.6px;top:283.3px;font-size:13.2px;color:#333">Named Views</div>

<div class="a" style="left:67px;top:308px;width:118px;height:24px;background:#F2F2F2"></div>
<svg style="left:44px;top:311px" width="13" height="18"><path d="M1 1L11.5 9L1 17Z" fill="#E0E2E6" stroke="#333" stroke-width="1.5" stroke-linejoin="round"/></svg>
<svg style="left:70px;top:313px" width="21" height="14" viewBox="0 0 21 14"><path d="M0.8 7Q10.5 -3.5 20.2 7Q10.5 17.5 0.8 7Z" fill="none" stroke="#B0B0B0" stroke-width="1.3"/><circle cx="10.5" cy="7" r="3" fill="none" stroke="#B0B0B0" stroke-width="1.3"/><path d="M4 1L17 13" stroke="#B0B0B0" stroke-width="1.3"/></svg>
<svg style="left:101px;top:312px" width="20" height="16"><path d="M0 0H8V1.5H0Z M0 2.5H20V16H0Z" fill="#999"/></svg>
<div class="t" style="left:139px;top:313.3px;font-size:13.2px;color:#333">Origin</div>

<div class="a" style="left:67px;top:338px;width:147px;height:24px;background:#F2F2F2"></div>
<svg style="left:42px;top:343px" width="15" height="15"><path d="M14 0.5V14H0.7Z" fill="#555" stroke="#222" stroke-width="1"/><path d="M13 3V13H3Z" fill="#9A9A9A"/></svg>
<svg style="left:70px;top:343px" width="21" height="14" viewBox="0 0 21 14"><path d="M0.5 7Q10.5 -4 20.5 7Q10.5 18 0.5 7Z" fill="#999"/><circle cx="10.5" cy="7" r="3.8" fill="#F2F2F2"/><circle cx="10.5" cy="7" r="2" fill="#999"/></svg>
<svg style="left:101px;top:342px" width="20" height="16"><path d="M0 0H8V1.5H0Z M0 2.5H20V16H0Z" fill="#999"/></svg>
<div class="t" style="left:139px;top:343.3px;font-size:13.2px;color:#333">Canvases</div>

<div class="a" style="left:89px;top:368px;width:63px;height:24px;background:#F2F2F2"></div>
<div class="a" style="left:152px;top:368px;width:105px;height:24px;background:#999999"></div>
<svg style="left:92px;top:373px" width="21" height="14" viewBox="0 0 21 14"><path d="M0.5 7Q10.5 -4 20.5 7Q10.5 18 0.5 7Z" fill="#999"/><circle cx="10.5" cy="7" r="3.8" fill="#F2F2F2"/><circle cx="10.5" cy="7" r="2" fill="#999"/></svg>
<svg style="left:124px;top:370px" width="20" height="20" viewBox="0 0 20 20"><rect x="0.5" y="0.5" width="19" height="19" fill="#8CC8F5" stroke="#444" stroke-width="1"/><path d="M1 19V13Q6 7 11 12Q14 9 19 13V19Z" fill="#A9A9A9"/><circle cx="14.5" cy="5.5" r="2.3" fill="#FFF4A0"/><circle cx="5.5" cy="14" r="3.8" fill="none" stroke="#D02020" stroke-width="1.6"/><path d="M3 16.5L8 11.5" stroke="#D02020" stroke-width="1.4"/></svg>
<div class="t" style="left:161px;top:373px;font-size:13.6px;color:#fff">US Side View</div>

<!-- COMMENTS -->
<div class="a" style="left:0;top:926px;width:374px;height:31px;background:#F2F2F2;border:1px solid #C8C8C8;border-left:none"></div>
<div class="t" style="left:30.5px;top:934.8px;font-size:12.2px;color:#707070">COMMENTS</div>
<svg style="left:347px;top:935.5px" width="12" height="12"><circle cx="6" cy="6" r="5.6" fill="#333"/><rect x="3" y="5.2" width="6" height="1.6" fill="#fff"/><rect x="5.2" y="3" width="1.6" height="6" fill="#fff"/></svg>
<div class="a" style="left:367px;top:935px;width:1px;height:13px;background:#777"></div>
<div class="a" style="left:369.5px;top:937px;width:1px;height:9px;background:#999"></div>
<!-- CANVAS DRAWING -->
<svg style="left:0;top:0" width="1912" height="1080" viewBox="0 0 1912 1080">
<defs><filter id="soft" x="0" y="0" width="1912" height="1080" filterUnits="userSpaceOnUse"><feGaussianBlur stdDeviation="0.85"/></filter></defs>
<rect x="374" y="389" width="1402" height="326" fill="#FFFFFF" opacity=".5"/><rect x="374" y="609" width="1402" height="1" fill="#A0F0A0"/>
<g filter="url(#soft)">
<g fill="none" stroke="#9A9A9A" stroke-width="1">
<!-- origin ring -->
<circle cx="375.7" cy="609.8" r="10" stroke="#B5B5B5" stroke-width="4"/>
<!-- fuselage outline -->
<path d="M393 555Q388 556 388 561V660Q388 664.5 393 664.5" stroke="#888" stroke-width="2.1"/>
<path d="M388 576Q381 578 381 586Q381 593 388 595M388 628Q381 630 381 640Q381 648 388 650" stroke="#A8A8A8"/>
<path d="M393 555L470 549L590 541" stroke="#888" stroke-width="2.1"/>
<path d="M392 559L590 546" stroke="#C4C4C4"/>
<path d="M590 541C612 522 650 511 700 511C760 511 850 527 950 540L1160 571L1430 605" stroke="#888" stroke-width="2.1"/>
<path d="M950 544L1160 575L1430 608" stroke="#B8B8B8"/>
<path d="M590 541C615 560 660 569 712 569C760 568 795 562 850 557L950 545" stroke="#8A8A8A" stroke-width="1.9"/>
<path d="M393 664.5L1460 662.5" stroke="#9C9C9C" stroke-width="3.4"/>
<path d="M683 570C684 590 668 605 662 625C655 645 645 652 637 662M866 600C895 598 905 605 912 625C918 640 925 650 925 662" stroke="#9E9E9E"/><path d="M683 571C684 590 668 605 662 625C655 645 645 652 638 662H760V571Z" fill="#000" opacity=".035" stroke="none"/>
<path d="M950 544L960 552" stroke="#9E9E9E"/>
<!-- dashed verticals -->
<g stroke="#9A9A9A" stroke-dasharray="5 3">
<path d="M424.6 558V664M591.7 542V664M598 542V664M945 542V662M953 542V662M1170 578V662M1213 583V662M1512 400V660M1636 430V660"/>
</g>
<!-- circles -->
<circle cx="469" cy="577" r="10" stroke="#A0A0A0" stroke-width="1.3"/>
<circle cx="586" cy="568" r="4" stroke="#8E8E8E" stroke-width="1.5"/>
<circle cx="957" cy="565" r="4.5" stroke="#8E8E8E" stroke-width="1.5"/>
<circle cx="409" cy="679" r="7" stroke="#8E8E8E" stroke-width="2"/>
<path d="M395 665Q394 690 400 715M403 665Q402 690 408 715" stroke="#A0A0A0" stroke-width="1.2"/>
<!-- servo / engine -->
<path d="M794 604H867V653H794Z" stroke="#8A8A8A" stroke-width="1.5"/>
<path d="M788 608V660M872 608V660" stroke="#9A9A9A" stroke-width="1.3"/>
<path d="M785 655H798V664H785ZM864 655H877V664H864Z" fill="#C8C8C8" stroke="#8A8A8A"/>
<path d="M795 560L842 558L846 590L800 593Z" stroke="#777" stroke-width="1.6"/>
<path d="M790 553H808V560H790ZM818 551H836V558H818Z" fill="#AAA" stroke="#777"/>
<circle cx="822" cy="659" r="3" stroke="#8A8A8A" stroke-width="1.4"/>
<path d="M818 664L805 715M830 665L855 703" stroke="#9A9A9A"/>
<path d="M733 565L741 571V575H725V571Z" fill="#777" stroke="none"/><text x="733" y="587" font-family="Liberation Sans" font-size="9" font-weight="bold" fill="#888" stroke="none" text-anchor="middle">CG</text>
<path d="M741 590V662M748 590V662" stroke="#9A9A9A" stroke-width="1.3"/>
<path d="M725 660Q723 612 740 600H748" stroke="#A8A8A8" stroke-width="1.2"/>
<path d="M1007 665V715" stroke="#A8A8A8"/><path d="M1017 565H1045L1036 582H1026ZM1017 650H1045L1036 633H1026Z" stroke="#B4B4B4"/><path d="M1031 582V633" stroke="#C4C4C4" stroke-dasharray="3 2"/>
<!-- wheel + gear -->
<rect x="1267" y="450" width="34.5" height="91.5" rx="17.2" fill="#7F7F7F" stroke="none"/><path d="M1271 466Q1274 454 1285 454Q1293 454 1296 460" fill="none" stroke="#BDBDBD" stroke-width="1.2"/>
<path d="M1305 530V480L1356 428M1310 530V483L1360 433M1303 465L1345 505L1340 508" stroke="#8A8A8A" stroke-width="1.2"/>
<path d="M1357 452L1322 500" stroke="#A8A8A8"/>

<path d="M1266 425H1330" stroke="#9A9A9A" stroke-width="1.6"/>

<!-- rudder -->
<path d="M1427 602C1418 575 1420 525 1450 482C1490 430 1560 396 1644 396L1665 398M1706 410C1745 445 1771 490 1771 545C1771 590 1740 625 1675 638" stroke="#888" stroke-width="2"/>
<path d="M1700 408L1712 388" stroke="#A0A0A0"/>
<path d="M1651 395V642" stroke="#888" stroke-width="2"/>
<path d="M1763.5 388V715" stroke="#858585" stroke-width="2.2"/>
<path d="M1491 388V600M1513 388V600M1533 420V520M1560 405V540M1590 400V500M1700 410V620M1720 430V560M1470 500V600" stroke="#D2D2D2"/>
<g stroke="#DCDCDC" stroke-width="1"><path d="M1440 520V600"/><path d="M1452 470V560"/><path d="M1478 430V520"/><path d="M1500 480V640"/><path d="M1522 400V470"/><path d="M1545 560V640"/><path d="M1570 420V500"/><path d="M1602 395V450"/><path d="M1615 470V540"/><path d="M1628 400V460"/><path d="M1668 410V600"/><path d="M1680 440V520"/><path d="M1695 560V630"/><path d="M1712 430V500"/><path d="M1735 470V610"/><path d="M1748 500V590"/><path d="M1580 600V650"/><path d="M1560 480V560"/></g><path d="M1594 451L1644 451L1632 503L1687 495L1687 544L1632 535L1644 590L1594 590L1607 535L1545 545L1545 495L1607 503Z" stroke="#B0B0B0"/>
<path d="M1607 535L1632 535L1644 590L1594 590Z" fill="#E2E2E2" stroke="none"/>
<path d="M1491.6 653H1719V661.5H1491.6Z" fill="#E4E4E4" stroke="#8E8E8E" stroke-width="1.3"/><rect x="1491.6" y="653" width="4" height="8.5" fill="#777" stroke="none"/>
<path d="M1419 615H1470V623.5H1419Z" fill="#E8E8E8" stroke="#9A9A9A"/><path d="M1470 619L1720 622M1470 622L1650 632" stroke="#A6A6A6" stroke-width="1.2"/>
<path d="M1368 624L1457 662.5" stroke="#A0A0A0" stroke-width="1.2"/><path d="M1457 662.5L1667 707.7" stroke="#888" stroke-width="2.1"/>
<path d="M1435 604H1660M1452 629L1655 640" stroke="#A8A8A8"/>
<path d="M1660 640V665H1680V690" stroke="#9A9A9A"/>
<path d="M1651 642V715" stroke="#A8A8A8"/>
<path d="M1578 648L1600 650M1660 604H1680V620H1660Z" stroke="#9A9A9A"/>
</g>
<!-- faint hatch/text marks -->
<g stroke="#C4C4C4" stroke-width="2.6" stroke-dasharray="2.5 1 1.5 1 3 2"><path d="M384 527H468M422 538.5H498M496 519H586M455 590H483M457 595H470M571 578H601M623 603H659M452 676H470M426 687H498M601 680H661M758 680H813M758 686.5H788M874 684.7H946M841 700H946M780 536H894M944 391H975M819 640H859M1021 573H1045M1277 442H1325M1332 521H1354M1319 532H1356M1304 542H1326M1271 568H1304M1196 636.6H1260M1169 678H1216M1473 627H1514M1673 640H1756M1580 678H1637M1521 481H1554M1672 478H1681M1699 478H1718M1611 519H1626M1530 573H1545M1699 570H1714M1657 579H1681M1657 584H1681"/></g>
<g stroke="#A4A4A4" stroke-width="1.8" stroke-dasharray="4 2"><path d="M399 608.5H740M760 607H1000M1075 601H1427M1430 601H1650"/></g>
<g stroke="#B8B8B8" stroke-width="1.6" stroke-dasharray="3 2"><path d="M428 619H703M964 601H1075M964 617H1075M1075 612H1400M1075 623H1330"/></g>
<g stroke="#D6D6D6" stroke-width="1.4"><path d="M420 640H520M560 640H700M480 585H560M600 590H650M620 628H700M1000 578H1120M1180 578H1250M1300 645H1400M1050 650H1200M1200 690H1260"/></g>
<rect x="1651" y="588" width="28" height="20" fill="#E4E4E4" stroke="#9A9A9A" stroke-width="1"/>
<path d="M1368 391H1292C1268 393 1266 418 1296 425L1345 428L1370 391" fill="none" stroke="#A0A0A0" stroke-width="1.1"/><circle cx="1287" cy="405" r="2.5" fill="none" stroke="#A8A8A8"/><path d="M1305 400H1340M1305 410H1325V426M1318 405V426" fill="none" stroke="#A8A8A8"/>
</g>
<!-- red canvas border -->
<rect x="373.5" y="388.5" width="1402.5" height="326.5" fill="none" stroke="#FA9C9C" stroke-width="1.5"/>
<!-- dimension -->
<path d="M385.5 347V546M1771.5 346V545" stroke="#4A4A4A" stroke-width="1.6"/>
<path d="M386 354H1022M1176 353.5H1771" stroke="#222" stroke-width="1.6"/>
<path d="M385.5 354L401 350.8V357.2Z" fill="#000"/>
<path d="M1771 353.5L1755.5 350.3V356.7Z" fill="#000"/>
<circle cx="385.3" cy="546.3" r="4.6" fill="#E6F5E6" stroke="#6ABF6A" stroke-width="1.3"/><circle cx="385.3" cy="546.3" r="1.6" fill="#6ABF6A"/>
<circle cx="1771" cy="545" r="4.6" fill="#E6F5E6" stroke="#6ABF6A" stroke-width="1.3"/><circle cx="1771" cy="545" r="1.6" fill="#6ABF6A"/>
</svg>
<div class="a" style="left:1022px;top:339px;width:154px;height:27px;background:#F0F0F0"></div>
<svg style="left:1026px;top:341px" width="12" height="24"><path d="M7 2L2 7M7 7L2 12M7 12L2 17M7 17L2 22" stroke="#D4D4D4" stroke-width="1"/><rect x="9" y="0" width="2" height="24" fill="#DADADA"/></svg>
<div class="a" style="left:1040px;top:341px;width:106px;height:24.5px;background:#fff;border:1px solid #C8C8C8"></div>
<div class="t" style="left:1078px;top:346.5px;font-size:13px;color:#222">1220</div>
<div class="a" style="left:1107px;top:344px;width:1.3px;height:18px;background:#111"></div>
<svg style="left:1158px;top:343px" width="7" height="19"><circle cx="3.4" cy="3" r="2" fill="#777"/><circle cx="3.4" cy="9.3" r="2" fill="#777"/><circle cx="3.4" cy="15.6" r="2" fill="#777"/></svg>
<!-- tooltip -->
<div class="a" style="left:1269px;top:663px;width:176px;height:17px;background:#F0F0F0;border:1px solid #6E6E6E"></div>
<div class="t" style="left:1273px;top:666.5px;font-size:12.8px;color:#111">Input a new value to calibrate</div>
<!-- view cube -->
<div class="a" style="left:1808px;top:272px;width:84px;height:12px;border-radius:50%;background:radial-gradient(ellipse at center,rgba(0,0,0,.22),rgba(0,0,0,0) 70%)"></div>
<div class="a" style="left:1813px;top:217px;width:60px;height:59px;border:1.2px solid #ABABAB;background:linear-gradient(#F3F3F3,#D9D9D9)"></div>
<div class="a" style="left:1824px;top:228px;width:37px;height:37px;background:#E2E4E8;opacity:.85"></div>
<div class="t" style="left:1823px;top:238px;font-size:14.5px;font-weight:bold;color:#8E9196;transform:scaleX(.86);transform-origin:0 0;letter-spacing:-.2px">RIGHT</div>
<div class="t" style="left:1813.5px;top:199.5px;font-size:13.5px;font-weight:bold;color:#8585FF">Z</div>
<div class="a" style="left:1817px;top:215px;width:3px;height:2px;background:#8080FF"></div>
<div class="t" style="left:1805.5px;top:271px;font-size:13.5px;font-weight:bold;color:#F48080">X</div>
<div class="t" style="left:1876.5px;top:262.5px;font-size:13.5px;font-weight:bold;color:#98F098">Y</div>
<div class="a" style="left:1873px;top:270px;width:3px;height:2px;background:#90F090"></div>
<!-- NAV BAR -->
<div class="a" style="left:805px;top:928px;width:296px;height:30px;background:#F0F0F0"></div>
<svg style="left:0;top:0" width="1912" height="1080" viewBox="0 0 1912 1080">
<!-- orbit -->
<path d="M819 933L816 938H818.5V953H820.5V938H823Z" fill="#fff" stroke="#555" stroke-width="1"/>
<path d="M813 946Q808 942 818 940Q829 939 829 943Q829 947 818 948" fill="none" stroke="#444" stroke-width="1.6"/>
<path d="M812 944L809.5 947.5L813.5 948Z" fill="#333"/>
<path d="M835 941H842L838.5 945Z" fill="#333"/>
<!-- look at -->
<rect x="850.5" y="938.5" width="19" height="14" rx="1" fill="#EAEAEA" stroke="#555" stroke-width="1.3"/>
<rect x="854" y="943" width="12" height="5" fill="#A8B4C4" stroke="#666" stroke-width=".8"/>
<path d="M852 937L856 933.5L860 936L864 933L868 936" fill="none" stroke="#555" stroke-width="1.2"/>
<!-- pan -->
<path d="M886 953Q882 947 883 942Q884 940 886 942L887 944V935Q887 933 889 933Q890.5 933 890.5 935V940V933.5Q890.5 931.5 892.5 931.5Q894.5 931.5 894.5 933.5V940V934.5Q894.5 932.5 896.5 932.5Q898.5 932.5 898.5 934.5V941V937Q898.5 935 900.5 935Q902.5 935 902.5 937V946Q902.5 953 896 953Z" fill="#F4F4F4" stroke="#444" stroke-width="1"/>
<!-- zoom -->
<circle cx="921.5" cy="943.5" r="5.5" fill="#E8F0F0" stroke="#555" stroke-width="1.5"/>
<path d="M925.5 947.5L930.5 952.5" stroke="#333" stroke-width="2.5" stroke-linecap="round"/>
<path d="M931 933V939M928 936H934M928 941H934" stroke="#333" stroke-width="1.1"/>
<!-- fit -->
<rect x="947.5" y="933.5" width="20" height="19" fill="none" stroke="#555" stroke-width=".8" stroke-dasharray="2 2"/>
<circle cx="955.5" cy="941.5" r="6.5" fill="#E8F0F0" stroke="#555" stroke-width="1.5"/>
<path d="M960.5 946.5L966 952" stroke="#333" stroke-width="2.5" stroke-linecap="round"/>
<path d="M975 941H982L978.5 945Z" fill="#333"/>
<!-- display -->
<rect x="989.5" y="933.5" width="19" height="14" rx="1.5" fill="#9DB6D8" stroke="#555" stroke-width="1.3"/>
<path d="M995 948H1003L1004 952H994Z" fill="#CCC" stroke="#777" stroke-width=".8"/>
<path d="M1012 941H1019L1015.5 945Z" fill="#333"/>
<!-- grid -->
<rect x="1027.5" y="933.5" width="19.5" height="19.5" rx="1.5" fill="#BDBDBD" stroke="#555" stroke-width="1"/>
<path d="M1031.5 934V953M1035.5 934V953M1039.5 934V953M1043.5 934V953M1028 937.5H1047M1028 941.5H1047M1028 945.5H1047M1028 949.5H1047" stroke="#fff" stroke-width="1"/>
<path d="M1050 941H1057L1053.5 945Z" fill="#333"/>
<!-- viewports -->
<rect x="1066.5" y="934.5" width="8.5" height="8" fill="#B0C4E8" stroke="#4E70B0" stroke-width="1.1"/><rect x="1076.5" y="934.5" width="8.5" height="8" fill="#B0C4E8" stroke="#4E70B0" stroke-width="1.1"/>
<rect x="1066.5" y="944" width="8.5" height="8" fill="#B0C4E8" stroke="#4E70B0" stroke-width="1.1"/><rect x="1076.5" y="944" width="8.5" height="8" fill="#B0C4E8" stroke="#4E70B0" stroke-width="1.1"/>
<path d="M1089 941H1096L1092.5 945Z" fill="#333"/>
</svg>
<!-- TIMELINE -->
<div class="a" style="left:0;top:962px;width:1912px;height:1px;background:#D2D2D2"></div>
<div class="a" style="left:0;top:963px;width:1912px;height:66px;background:#F2F2F2"></div>
<div class="a" style="left:0;top:1029px;width:1912px;height:1px;background:#FAFAFA"></div>
<svg style="left:0;top:960px" width="220" height="60" viewBox="0 960 220 60">
<g fill="#4A4A4A">
<rect x="7.5" y="985.5" width="2.6" height="17"/><path d="M23 985.5V1002.5L10.5 994Z"/>
<path d="M50.5 985.5V1002.5L38 994Z"/><rect x="51.5" y="990" width="2.6" height="8"/>
<path d="M69.5 985V1003L85.5 994Z"/>
<rect x="100" y="990" width="2.6" height="8"/><path d="M103.5 985.5V1002.5L116 994Z"/>
<path d="M132.3 985.5V1002.5L145 994Z"/><rect x="145.5" y="985.5" width="2.6" height="17"/>
</g>
<rect x="178" y="984" width="17.5" height="17.5" fill="#7FC3F7" stroke="#3E8ED0" stroke-width="1"/>
<path d="M178.5 1001V993Q183 988 187 992Q190 990 195 994V1001Z" fill="#3E8ED0"/>
<circle cx="190" cy="988.5" r="1.8" fill="#FBF6C2"/>
<rect x="186.5" y="1006" width="2" height="8" fill="#C8C8C8"/>
<path d="M194 975H209V980L203 985H200L194 980Z" fill="#5A5A5A"/>
<rect x="200.5" y="984" width="2.6" height="31" fill="#5A5A5A"/>
</svg>
<svg style="left:1877px;top:983px" width="21" height="21" viewBox="0 0 20 20"><path fill="#999" d="M8.3 0h3.4l.5 3a7 7 0 0 1 2 .8l2.5-1.8 2.4 2.4-1.8 2.5a7 7 0 0 1 .8 2l3 .5v3.4l-3 .5a7 7 0 0 1-.8 2l1.8 2.5-2.4 2.4-2.5-1.8a7 7 0 0 1-2 .8l-.5 3H8.3l-.5-3a7 7 0 0 1-2-.8l-2.5 1.8L.9 16.8l1.8-2.5a7 7 0 0 1-.8-2l-3-.5V8.3l3-.5a7 7 0 0 1 .8-2L.9 3.3 3.3.9l2.5 1.8a7 7 0 0 1 2-.8Z"/><circle cx="10" cy="10" r="3.4" fill="#F2F2F2"/></svg>
<!-- TASKBAR -->
<div class="a" style="left:0;top:1030px;width:1912px;height:50px;background:linear-gradient(90deg,#383733 0%,#383733 21.7%,#303231 31.1%,#272C33 44.5%,#333235 52.6%,#2E3134 61.5%,#2E3034 68.3%,#423733 72.4%,#473A35 75.6%,#3D3430 85.5%,#1F1F1F 89.5%,#1F1F1F 100%)"></div>
<div class="a" style="left:0;top:1030px;width:54px;height:50px;background:#1B1B1B"></div>
<div class="a" style="left:54px;top:1030px;width:360px;height:50px;background:#343434;border:1px solid #5E5E5E;border-bottom:none"></div>
<svg style="left:13.5px;top:1044px" width="21" height="22" viewBox="0 0 21 22"><path d="M0 3L8.3 1.6V10.1H0Z M9.2 1.4L20.6 0V10.1H9.2Z M0 11H8.3V19.8L0 18.6Z M9.2 11H20.6V21.5L9.2 20Z" fill="#fff"/></svg>
<svg style="left:68px;top:1044px" width="22" height="22"><circle cx="14" cy="7" r="6.3" fill="none" stroke="#E8E8E8" stroke-width="1.4"/><path d="M9.5 11.5L0.8 20.5" stroke="#E8E8E8" stroke-width="1.5"/></svg>
<div class="t" style="left:104px;top:1046.3px;font-size:18.4px;color:#E0E0E0">Type here to search</div>
<div class="a" style="left:319px;top:1035.5px;width:90px;height:39px;background:#1B2733;border-radius:6px"></div>
<div class="t" style="left:341px;top:1045px;font-size:13px;font-weight:bold;font-style:italic;color:#2F8BDB;letter-spacing:-.6px">Amsted</div>
<div class="t" style="left:342px;top:1057.5px;font-size:5px;font-weight:bold;color:#2F8BDB;letter-spacing:1.3px">INDUSTRIES</div>
<!-- task view -->
<svg style="left:433px;top:1043px" width="22" height="24"><path d="M1 5.5H15V18.5H1Z" fill="none" stroke="#E8E8E8" stroke-width="1.3"/><path d="M0 2.5H16M0 21.5H16M19.5 0V4.5M19.5 7V17M19.5 19.5V24" stroke="#E8E8E8" stroke-width="1.3"/></svg>
<!-- explorer -->
<svg style="left:494px;top:1042px" width="28" height="26" viewBox="0 0 28 26"><path d="M0 2Q0 0 2 0H10L13 3H26Q28 3 28 5V24Q28 26 26 26H2Q0 26 0 24Z" fill="#E8A33A"/><path d="M0 8H28V24Q28 26 26 26H2Q0 26 0 24Z" fill="#FFCB4C"/><path d="M7 14H21V26H17V18H11V26H7Z" fill="#3F86D1"/></svg>
<!-- IE -->
<svg style="left:555px;top:1040px" width="30" height="30" viewBox="0 0 30 30"><path d="M15 6C9 6 5.5 10.5 5.5 15.5C5.5 21 9.5 25 15 25C19 25 22 23 23.5 20H18.5C17.5 21.3 16.5 22 15 22C12 22 10 20 10 17H24.5V15.5C24.5 10 21 6 15 6ZM10 13.5C10.5 11 12.5 9.5 15 9.5C17.5 9.5 19.5 11 20 13.5Z" fill="#2FA8E8"/><path d="M3 26C0 21 6 10 16 5C24 1 29 1 29 4C29 7 25 10 22 12C25 8 26 5 24 4.5C21 4 12 9 7 16C3 22 3 25 5 26C7 27 11 25 14 23C10 27 5 29 3 26Z" fill="#F6C122"/></svg>
<!-- outlook -->
<svg style="left:618px;top:1041px" width="28" height="28" viewBox="0 0 28 28"><path d="M10 3H26Q27.5 3 27.5 4.5V22Q27.5 23.5 26 23.5H10Z" fill="#fff"/><path d="M11 9L19 15L27 9V22H11Z" fill="#fff" stroke="#0F6CC0" stroke-width="1"/><path d="M0 4L16 1V27.5L0 24.5Z" fill="#0F6CC0"/><ellipse cx="7.5" cy="14" rx="4.2" ry="5.5" fill="none" stroke="#fff" stroke-width="2.4"/></svg>
<!-- chrome -->
<svg style="left:679px;top:1040px" width="30" height="30" viewBox="0 0 30 30"><circle cx="15" cy="15" r="15" fill="#F2C231"/><path d="M15 0A15 15 0 0 0 2 7.5L8.5 18.8L15 7.5H28A15 15 0 0 0 15 0Z" fill="#E0412F"/><path d="M2 7.5A15 15 0 0 0 13.5 30L20 18.8L8.5 18.8Z" fill="#2FA14F"/><circle cx="15" cy="15" r="6.8" fill="#fff"/><circle cx="15" cy="15" r="5.3" fill="#4A87EB"/></svg>
<!-- yellow files -->
<svg style="left:742px;top:1040px" width="28" height="28" viewBox="0 0 28 28"><path d="M0 2L16 0V17L3 26Z" fill="#2F6BB4"/><path d="M4 10H21L27 4Q28 16 20 22Q15 27 7 26L6 16Z" fill="#F8B51A"/><path d="M21 2Q27 6 24 14" stroke="#F8B51A" stroke-width="3" fill="none"/></svg>
<!-- green C -->
<svg style="left:803px;top:1040px" width="30" height="30" viewBox="0 0 30 30"><path d="M6.5 0H29V22L22.5 29H0V6.5Z" fill="#B7D434"/><path d="M22 7.5H10.5L8 10V19L10.5 21.5H22V17.5H13V11.5H22Z" fill="#111"/></svg>
<!-- snip -->
<svg style="left:865px;top:1040px" width="30" height="30" viewBox="0 0 30 30"><ellipse cx="13" cy="11" rx="12" ry="7" transform="rotate(-15 13 11)" fill="#E8E8E8" stroke="#D03A3A" stroke-width="1.4"/><path d="M2 16Q6 20 13 18L10 21Q4 21 2 16Z" fill="#999"/><path d="M13 3L16 16M19 4L15 16" stroke="#555" stroke-width="1"/><circle cx="18" cy="24" r="3.5" fill="none" stroke="#2F8FDB" stroke-width="2"/><circle cx="25" cy="19" r="3.5" fill="none" stroke="#2F8FDB" stroke-width="2"/><path d="M15 16L18 21M16 16L22 19" stroke="#2F8FDB" stroke-width="1.6"/></svg>
<!-- autocad -->
<svg style="left:927px;top:1040px" width="30" height="30" viewBox="0 0 30 30"><rect width="30" height="30" fill="#FBEDEB"/><path d="M5 27L14 4H18L25 27H20.5L18.5 20.5H12L9.5 27ZM13 17H17.5L15.5 10Z" fill="#C8242B"/></svg>
<!-- TL75 -->
<svg style="left:989px;top:1040px" width="30" height="30" viewBox="0 0 30 30"><rect width="30" height="30" fill="#DDEFFA"/><text x="15" y="13" font-family="Liberation Sans" font-size="12.5" font-weight="bold" fill="#D0242B" text-anchor="middle" textLength="27" lengthAdjust="spacingAndGlyphs">TL75</text><path d="M4 21H26M11 16V26M16 16V26M19 17L12 26" stroke="#444" stroke-width="1.1"/></svg>
<!-- edge -->
<svg style="left:1051px;top:1040px" width="30" height="30" viewBox="0 0 30 30"><circle cx="15" cy="15" r="15" fill="#1C8DD9"/><path d="M15 0A15 15 0 0 1 30 15Q30 20 24 20H11Q11 13 18 12Q14 6 6 9Q2 11 0.5 17Q0 6 9 1.5Q12 0 15 0Z" fill="#3DCB7C"/><path d="M11 20Q12 26 20 26Q25 26 28 23Q24 30 15 30Q6 30 2 23Q0 19 1 14Q4 24 11 20Z" fill="#1163B5"/></svg>
<!-- fusion active -->
<div class="a" style="left:1098px;top:1030px;width:61px;height:50px;background:#474747"></div>
<svg style="left:1113px;top:1040px" width="30" height="30" viewBox="0 0 30 30"><path d="M1 1H25L29 5V29H1Z" fill="#F36E22"/><path d="M1 21H29V29H1Z" fill="#A8441A"/><path d="M10 4.5H20V8H14V11H19V14.5H14V19H10Z" fill="#fff"/><text x="15" y="27.5" font-family="Liberation Sans" font-size="6.5" font-weight="bold" fill="#fff" text-anchor="middle">360</text></svg>
<div class="a" style="left:669px;top:1077px;width:40px;height:3px;background:#76B9ED"></div>
<div class="a" style="left:709px;top:1077px;width:11px;height:3px;background:#5A8DB8"></div>
<div class="a" style="left:1098px;top:1077px;width:61px;height:3px;background:#76B9ED"></div>
<!-- tray -->
<svg style="left:1505px;top:1041px" width="28" height="28" viewBox="0 0 28 28"><defs><linearGradient id="moon" x1="0" y1="0" x2="0" y2="1"><stop offset="0" stop-color="#FBC02D"/><stop offset="1" stop-color="#F07D1A"/></linearGradient></defs><path d="M17 1.5A13.3 13.3 0 1 1 1 17Q9 20 14 13.5Q18 8 17 1.5Z" fill="url(#moon)"/></svg>
<div class="t" style="left:1544.5px;top:1049px;font-size:16.6px;color:#F0F0F0">27°F  Clear</div>
<svg style="left:1650px;top:1050px" width="18" height="10"><path d="M1 9L9 1L17 9" fill="none" stroke="#E8E8E8" stroke-width="1.4"/></svg>
<svg style="left:1678px;top:1048px" width="23" height="16" viewBox="0 0 23 16"><rect x="5.5" y="3.3" width="14.5" height="10.4" fill="none" stroke="#F0F0F0" stroke-width="1.3"/><rect x="7" y="4.8" width="11.5" height="7.4" fill="#F0F0F0"/><rect x="20.2" y="6.3" width="1.6" height="4.4" fill="#F0F0F0"/><path d="M1.5 1V4M4 1V4M0.8 4H4.8V6Q4.8 8 2.8 8Q0.8 8 0.8 6ZM2.8 8V14" fill="#2A2A2A" stroke="#F0F0F0" stroke-width="1.1"/></svg>
<svg style="left:1711px;top:1047.5px" width="18" height="17"><path d="M1 16A15 15 0 0 1 16 1M4.5 16A11.5 11.5 0 0 1 16 4.5M8 16A8 8 0 0 1 16 8M11.5 16A4.5 4.5 0 0 1 16 11.5" fill="none" stroke="#E8E8E8" stroke-width="1.2"/><circle cx="15.5" cy="15.5" r="1.5" fill="#E8E8E8"/></svg>
<svg style="left:1739px;top:1046.5px" width="21" height="18"><path d="M1 6H5L10 1.5V16.5L5 12H1Z" fill="none" stroke="#E8E8E8" stroke-width="1.2"/><path d="M13 6Q15 9 13 12M15.5 4Q19 9 15.5 14M18 2Q23 9 18 16" fill="none" stroke="#9A9A9A" stroke-width="1.1"/><path d="M13 6Q15 9 13 12" fill="none" stroke="#E8E8E8" stroke-width="1.2"/></svg>
<div class="t" style="left:1776px;top:1037.4px;font-size:14.2px;color:#F0F0F0">10:03 PM</div>
<div class="t" style="left:1776px;top:1058.8px;font-size:15.3px;color:#F0F0F0">2/3/2023</div>
<svg style="left:1862px;top:1043px" width="32" height="31" viewBox="0 0 32 31"><path d="M1 1H20V14H8L4 18V14H1Z" fill="#fff"/><path d="M4 5H17M4 8H17M4 11H13" stroke="#333" stroke-width="1"/><circle cx="21" cy="20" r="9.5" fill="#2B2B2B" stroke="#C0C0C0" stroke-width="1.2"/><text x="21" y="25" font-family="Liberation Sans" font-size="13" fill="#fff" text-anchor="middle">7</text></svg>
<div class="a" style="left:1908px;top:1030px;width:1px;height:50px;background:#5A5A5A"></div>
</body></html>
